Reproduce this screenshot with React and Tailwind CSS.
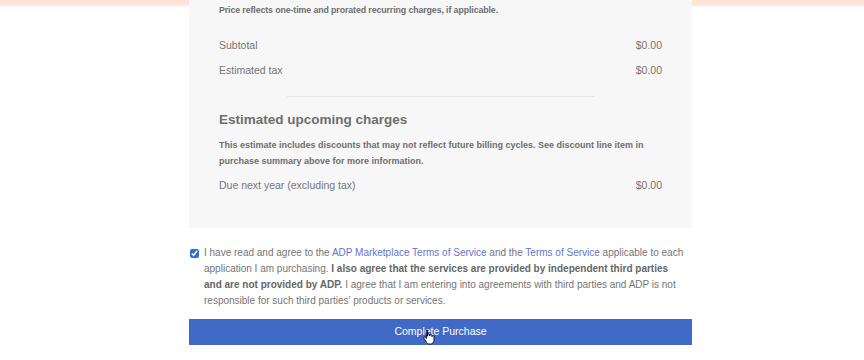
import React from 'react';

const Row = ({ label, value }) => (
  <div className="flex justify-between items-center text-[10.5px] text-[#757575] leading-[14px]">
    <span>{label}</span>
    <span>{value}</span>
  </div>
);

const HandCursor = () => (
  <svg width="12" height="16" viewBox="0 0 12 16" className="absolute left-[234px] top-[10px]">
    <path
      d="M3.5 1.2c.6 0 1 .4 1 1v5h.2V5.8c0-.6.4-1 1-1s1 .4 1 1V7h.2v-.6c0-.6.4-1 1-1s1 .4 1 1V7.6h.2c0-.6.4-1 1-1s.9.4.9 1v3.6c0 2.2-1.4 3.8-3.6 3.8H6.2c-1.2 0-2-.5-2.7-1.5L1 9.4c-.3-.5-.2-1 .2-1.3.4-.3 1-.2 1.3.2l.9 1.2V2.2c0-.6.4-1 1-1z"
      fill="#fff"
      stroke="#000"
      strokeWidth="0.9"
    />
  </svg>
);

export default function App() {
  return (
    <div className="w-[864px] h-[360px] bg-white overflow-hidden relative font-['Liberation_Sans',Arial,sans-serif]">
      <div className="h-[5px] bg-[#fde3da] shadow-[0_1px_2px_rgba(240,180,170,0.4)]" />
      <div className="w-[503px] ml-[189px]">
        <div className="bg-[#f7f7f7] px-[30px] pt-[1px] pb-[36px] mt-[-5px]">
          <p className="text-[8.8px] font-bold text-[#6e6e6e] leading-[14px] mt-[2px] tracking-[-0.1px]">
            Price reflects one-time and prorated recurring charges, if applicable.
          </p>
          <div className="mt-[21px] flex flex-col gap-[11px]">
            <Row label="Subtotal" value="$0.00" />
            <Row label="Estimated tax" value="$0.00" />
          </div>
          <div className="mx-[68px] mt-[19px] h-px bg-[#e6e6e6]" />
          <h2 className="mt-[14px] text-[13.5px] font-bold text-[#6e6e6e] leading-[18px]">
            Estimated upcoming charges
          </h2>
          <p className="mt-[8px] text-[9px] font-bold text-[#6e6e6e] leading-[16px]">
            This estimate includes discounts that may not reflect future billing cycles. See discount line item in purchase summary above for more information.
          </p>
          <div className="mt-[9px]">
            <Row label="Due next year (excluding tax)" value="$0.00" />
          </div>
        </div>

        <div className="flex gap-[5px] mt-[17px] pr-[5px]">
          <input
            type="checkbox"
            defaultChecked
            className="w-[9px] h-[9px] mt-[4px] ml-[1px] shrink-0 accent-[#2f6fdb]"
          />
          <p className="text-[10px] leading-[16px] text-[#757575]">
            I have read and agree to the{' '}
            <span className="text-[#6474cf]">ADP Marketplace Terms of Service</span> and the{' '}
            <span className="text-[#6474cf]">Terms of Service</span> applicable to each application I am purchasing.{' '}
            <span className="font-bold text-[#666]">
              I also agree that the services are provided by independent third parties and are not provided by ADP.
            </span>{' '}
            I agree that I am entering into agreements with third parties and ADP is not responsible for such third parties' products or services.
          </p>
        </div>

        <button className="relative mt-[10px] w-full h-[26px] bg-[#4169c6] text-white text-[10.5px] flex items-center justify-center">
          Complete Purchase
          <HandCursor />
        </button>
      </div>
    </div>
  );
}
